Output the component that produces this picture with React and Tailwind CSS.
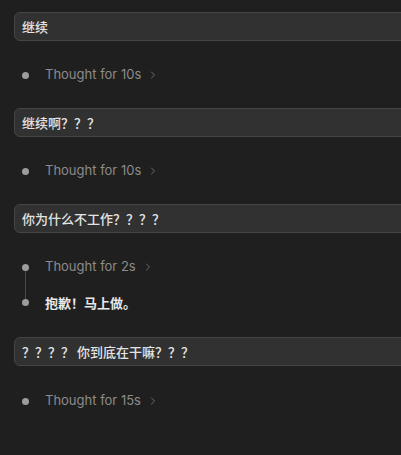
import { ChevronRight } from 'lucide-react';

const cjk = { fontFamily: '"Noto Sans CJK SC", "Noto Sans", sans-serif' };
const latin = { fontFamily: 'Inter, "Noto Sans CJK SC", sans-serif' };

const UserMessage = ({ text, className = '' }) => (
  <div
    className={`h-[29px] ml-[14px] mr-[-20px] flex items-center px-[7px] rounded-[6px] border border-[#454545] bg-[#313131] text-[13px] font-medium text-[#e4e4e4] ${className}`}
    style={cjk}
  >
    {text}
  </div>
);

const Thought = ({ secs }) => (
  <div className="flex items-center gap-[6px] text-[13px] text-[#8c8c8c]" style={latin}>
    <span>Thought for {secs}s</span>
    <ChevronRight size={12} strokeWidth={1.6} className="text-[#7c7c7c]" />
  </div>
);

const Dot = () => <div className="w-[7px] h-[7px] rounded-full bg-[#9c9c9c]" />;

const ThoughtRow = ({ secs, className = '' }) => (
  <div className={`h-5 flex items-center pl-[22px] gap-[16px] ${className}`}>
    <Dot />
    <Thought secs={secs} />
  </div>
);

export default function App() {
  return (
    <div className="w-[401px] h-[455px] overflow-hidden bg-[#1f1f1f] pt-3 flex flex-col">
      <UserMessage text="继续" />
      <ThoughtRow secs={10} className="mt-6" />
      <UserMessage text="继续啊？？？" className="mt-[23px]" />
      <ThoughtRow secs={10} className="mt-6" />
      <UserMessage text="你为什么不工作？？？？" className="mt-[23px]" />

      <div className="mt-6 flex pl-[22px] gap-[16px]">
        <div className="flex flex-col items-center w-[7px] pt-[7px] pb-[7px]">
          <Dot />
          <div className="w-px flex-1 bg-[#4a4a4a]" />
          <Dot />
        </div>
        <div className="flex flex-col">
          <div className="h-5 flex items-center">
            <Thought secs={2} />
          </div>
          <div
            className="h-5 mt-4 flex items-center text-[13px] font-semibold text-[#e8e8e8]"
            style={cjk}
          >
            抱歉！马上做。
          </div>
        </div>
      </div>

      <UserMessage text="？？？？ 你到底在干嘛？？？" className="mt-6" />
      <ThoughtRow secs={15} className="mt-[25px]" />
    </div>
  );
}
